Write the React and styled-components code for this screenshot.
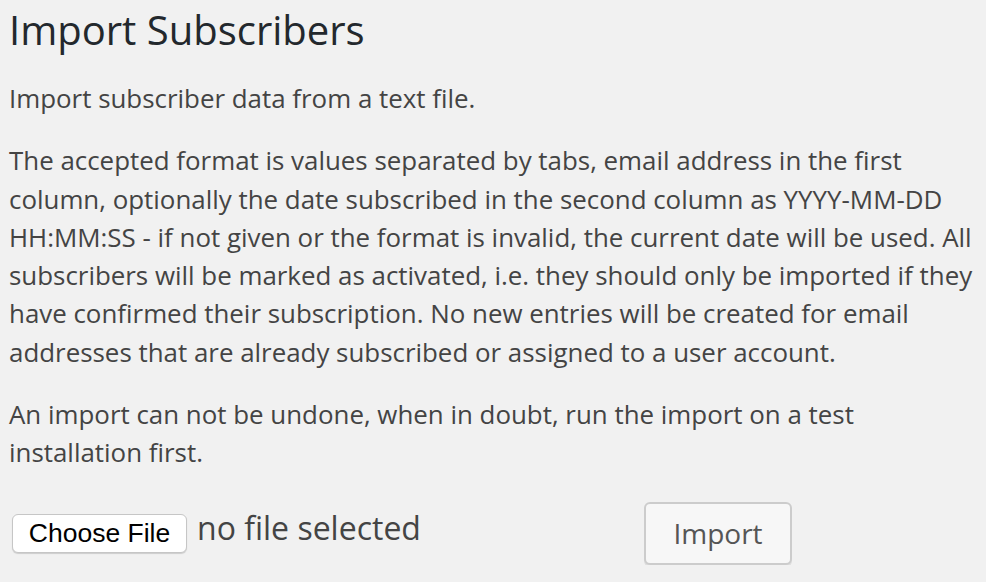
import React from 'react';
import styled, { createGlobalStyle } from 'styled-components';

const GlobalStyle = createGlobalStyle`
  html, body {
    margin: 0;
    padding: 0;
    background: #f1f1f1;
  }
  body {
    font-family: "Open Sans", "DejaVu Sans", sans-serif;
    color: #444;
  }
`;

const Wrap = styled.div`
  padding: 0 0 0 9px;
  width: 977px;
  box-sizing: border-box;
`;

const Title = styled.h1`
  margin: 0;
  padding: 4px 0 0;
  font-size: 40px;
  font-weight: 400;
  line-height: 52px;
  color: #23282d;
`;

const Text = styled.p`
  margin: ${(p) => p.top || 24}px 0 0;
  font-size: 25.9px;
  line-height: 38.3px;
  color: #444;
`;

const FormRow = styled.div`
  display: flex;
  align-items: center;
  margin-top: 30px;
`;

const FilePicker = styled.div`
  display: flex;
  align-items: center;
  width: 632px;
  padding-left: 3px;
`;

const ChooseButton = styled.button`
  font-family: "Liberation Sans", Arial, sans-serif;
  font-size: 26.5px;
  color: #000;
  background: #fff;
  border: 1px solid #c6c6c6;
  border-radius: 6px;
  box-shadow: 0 1px 1px rgba(0, 0, 0, 0.15);
  height: 39px;
  width: 175px;
  padding: 0;
`;

const FileName = styled.span`
  margin-left: 10px;
  font-size: 32px;
  color: #444;
  position: relative;
  top: -6px;
`;

const ImportButton = styled.button`
  font-family: "Open Sans", sans-serif;
  font-size: 28px;
  color: #555;
  background: #f7f7f7;
  border: 2px solid #ccc;
  border-radius: 6px;
  box-shadow: 0 2px 0 #ddd;
  width: 148px;
  height: 63px;
  padding: 0;
`;

export default function App() {
  return (
    <>
      <GlobalStyle />
      <Wrap>
        <Title>Import Subscribers</Title>
        <Text top={23}>Import subscriber data from a text file.</Text>
        <Text>
          The accepted format is values separated by tabs, email address in the first column,
          optionally the date subscribed in the second column as YYYY-MM-DD HH:MM:SS - if not
          given or the format is invalid, the current date will be used. All subscribers will be
          marked as activated, i.e. they should only be imported if they have confirmed their
          subscription. No new entries will be created for email addresses that are already
          subscribed or assigned to a user account.
        </Text>
        <Text>
          An import can not be undone, when in doubt, run the import on a test installation first.
        </Text>
        <FormRow>
          <FilePicker>
            <ChooseButton type="button">Choose File</ChooseButton>
            <FileName>no file selected</FileName>
          </FilePicker>
          <ImportButton type="button">Import</ImportButton>
        </FormRow>
      </Wrap>
    </>
  );
}
